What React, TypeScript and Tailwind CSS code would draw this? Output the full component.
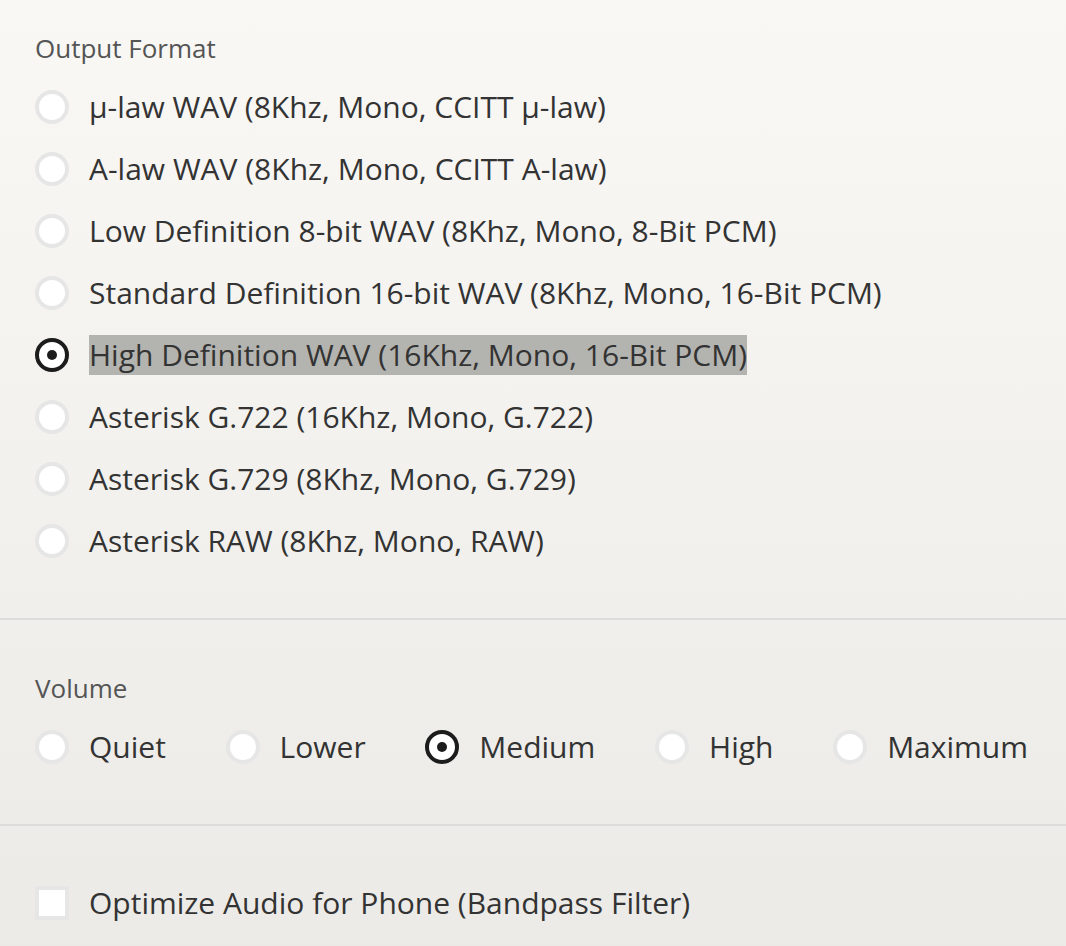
import { useState } from "react";

const formats = [
  "μ-law WAV (8Khz, Mono, CCITT μ-law)",
  "A-law WAV (8Khz, Mono, CCITT A-law)",
  "Low Definition 8-bit WAV (8Khz, Mono, 8-Bit PCM)",
  "Standard Definition 16-bit WAV (8Khz, Mono, 16-Bit PCM)",
  "High Definition WAV (16Khz, Mono, 16-Bit PCM)",
  "Asterisk G.722 (16Khz, Mono, G.722)",
  "Asterisk G.729 (8Khz, Mono, G.729)",
  "Asterisk RAW (8Khz, Mono, RAW)",
];

const volumes = ["Quiet", "Lower", "Medium", "High", "Maximum"];

function Radio({ checked }: { checked: boolean }) {
  return checked ? (
    <span className="w-[34px] h-[34px] shrink-0 rounded-full border-[4px] border-[#1c1c1c] bg-white flex items-center justify-center">
      <span className="w-[10px] h-[10px] rounded-full bg-[#1c1c1c]" />
    </span>
  ) : (
    <span className="w-[34px] h-[34px] shrink-0 rounded-full border-[4px] border-[#e6e6e6] bg-white" />
  );
}

export default function App() {
  const [format, setFormat] = useState(4);
  const [volume, setVolume] = useState(2);
  const [bandpass, setBandpass] = useState(false);

  return (
    <div className="min-h-[946px] w-full bg-gradient-to-b from-[#f9f8f5] to-[#ebeae7] font-['Open_Sans',sans-serif] text-[#333333]">
      {/* Output format */}
      <section className="px-[35px] pt-[32px] pb-[57px]">
        <div className="text-[26px] leading-[32px] text-[#555555]">Output Format</div>
        <div className="mt-[23px] flex flex-col gap-[22px]">
          {formats.map((f, i) => (
            <label
              key={f}
              onClick={() => setFormat(i)}
              className="flex items-center gap-[20px] h-[40px] cursor-pointer"
            >
              <Radio checked={format === i} />
              <span
                className={`text-[30px] leading-[40px] whitespace-nowrap ${
                  format === i ? "bg-[#b3b3b0]" : ""
                }`}
              >
                {f}
              </span>
            </label>
          ))}
        </div>
      </section>

      <div className="h-[2px] bg-[#dcdcda]" />

      {/* Volume */}
      <section className="px-[35px] pt-[52px] pb-[57px]">
        <div className="text-[26px] leading-[32px] text-[#555555]">Volume</div>
        <div className="mt-[23px] flex items-center justify-between pr-[3px]">
          {volumes.map((v, i) => (
            <label
              key={v}
              onClick={() => setVolume(i)}
              className="flex items-center gap-[20px] h-[40px] cursor-pointer"
            >
              <Radio checked={volume === i} />
              <span className="text-[30px] leading-[40px]">{v}</span>
            </label>
          ))}
        </div>
      </section>

      <div className="h-[2px] bg-[#dcdcda]" />

      {/* Bandpass */}
      <section className="px-[35px] pt-[57px] pb-[40px]">
        <label
          onClick={() => setBandpass(!bandpass)}
          className="flex items-center gap-[20px] h-[40px] cursor-pointer"
        >
          <span className="w-[34px] h-[34px] shrink-0 border-[4px] border-[#e6e6e6] bg-white flex items-center justify-center">
            {bandpass && <span className="w-[14px] h-[14px] bg-[#1c1c1c]" />}
          </span>
          <span className="text-[30px] leading-[40px]">Optimize Audio for Phone (Bandpass Filter)</span>
        </label>
      </section>
    </div>
  );
}
